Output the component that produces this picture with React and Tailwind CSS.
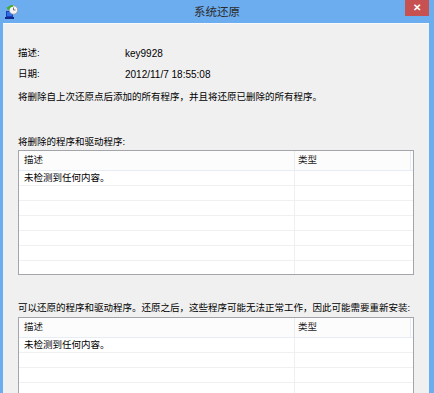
import React from "react";

const FONT = { fontFamily: '"Liberation Sans", "Noto Sans CJK SC", sans-serif' };

function Table({ rows }) {
  return (
    <div className="border border-[#a3a5aa] bg-white h-[125px] overflow-hidden w-[396px]">
      <div className="flex h-[20px] border-b border-[#e6edf5] bg-[#fcfcfc] text-[9.5px] text-[#1e1e1e]">
        <div className="w-[276px] pl-[5px] flex items-center border-r border-[#ebebeb]">描述</div>
        <div className="w-[116px] pl-[3px] flex items-center border-r border-[#e6edf5]">类型</div>
      </div>
      {Array.from({ length: rows }).map((_, i) => (
        <div key={i} className="flex h-[15px] border-b border-[#f0f0f0] text-[9.5px] text-black">
          <div className="w-[276px] pl-[5px] flex items-center border-r border-[#f0f0f0] leading-none">
            {i === 0 ? "未检测到任何内容。" : ""}
          </div>
          <div className="w-[116px]" />
        </div>
      ))}
    </div>
  );
}

function Icon() {
  return (
    <svg width="14" height="14" viewBox="0 0 14 14">
      <rect x="1" y="6" width="7" height="6" fill="#1b3fb8" />
      <rect x="2" y="7" width="5" height="4" fill="#2e6ee6" />
      <rect x="0" y="12" width="9" height="2" fill="#12288a" />
      <circle cx="8.5" cy="5" r="4.2" fill="#f4f4f4" stroke="#9a9a9a" strokeWidth="0.8" />
      <path d="M8.5 2.5 V5 H10.5" stroke="#555" strokeWidth="0.8" fill="none" />
      <path d="M3 4 A5 5 0 0 1 8 0.8" stroke="#3fae2a" strokeWidth="1.8" fill="none" />
      <path d="M1.5 2 L3 5.5 L5 3 Z" fill="#3fae2a" />
    </svg>
  );
}

export default function App() {
  return (
    <div className="w-[434px] h-[393px] bg-[#6badef] overflow-hidden relative" style={FONT}>
      <div className="h-[23px] flex items-center relative">
        <div className="absolute left-[5px] top-[5px]"><Icon /></div>
        <div className="flex-1 text-center text-[11.5px] text-[#2b2b2b] pt-[2px]">系统还原</div>
        <div className="absolute left-[405px] top-0 w-[24px] h-[16px] bg-[#c75050] flex items-center justify-center text-white text-[10px] font-bold leading-none">
          ✕
        </div>
      </div>
      <div className="ml-[3px] w-[426px] h-[370px] bg-[#f0f0f0] border-t border-[#f9f9f9] px-[15px] pt-[22px] overflow-hidden">
        <div className="flex h-[14px] items-center text-[9.5px] text-black">
          <div className="w-[107px]">描述:</div>
          <div className="text-[10px]">key9928</div>
        </div>
        <div className="flex h-[14px] items-center mt-[7px] text-[9.5px] text-black">
          <div className="w-[107px]">日期:</div>
          <div className="text-[10px]">2012/11/7 18:55:08</div>
        </div>
        <div className="h-[14px] flex items-center mt-[9px] text-[9.5px] text-black whitespace-nowrap">
          将删除自上次还原点后添加的所有程序，并且将还原已删除的所有程序。
        </div>
        <div className="h-[14px] flex items-center mt-[31px] text-[9.5px] text-black whitespace-nowrap">
          将删除的程序和驱动程序:
        </div>
        <div className="mt-[1px]">
          <Table rows={7} />
        </div>
        <div className="h-[14px] flex items-center mt-[26px] text-[9.5px] text-black whitespace-nowrap">
          可以还原的程序和驱动程序。还原之后，这些程序可能无法正常工作，因此可能需要重新安装:
        </div>
        <div className="mt-[2px]">
          <Table rows={7} />
        </div>
      </div>
    </div>
  );
}
